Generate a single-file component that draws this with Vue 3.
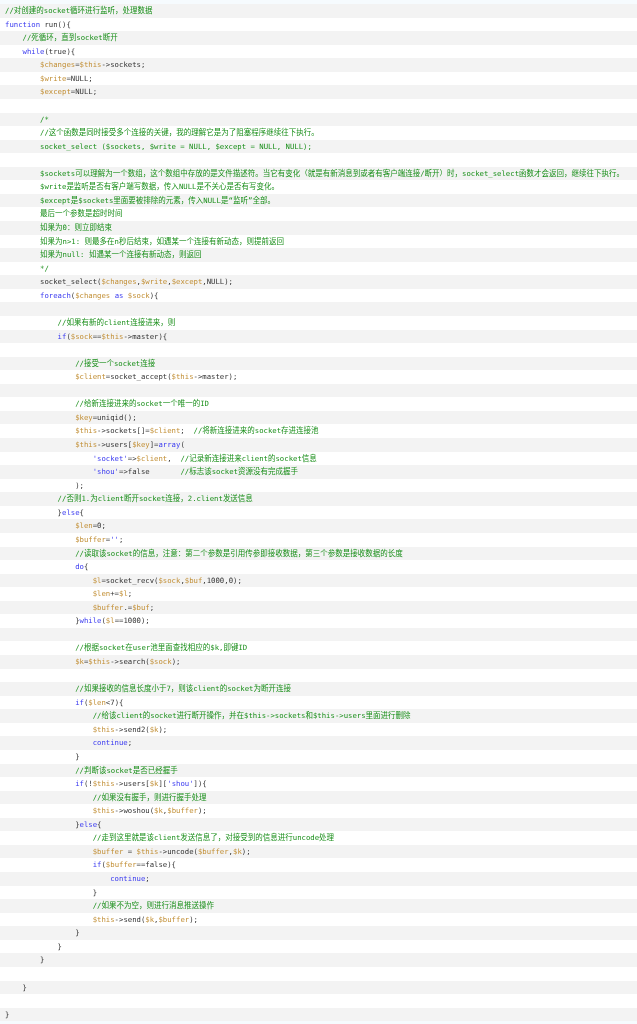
<script setup>
const source = [
  "//对创建的socket循环进行监听，处理数据",
  "function run(){",
  "    //死循环，直到socket断开",
  "    while(true){",
  "        $changes=$this->sockets;",
  "        $write=NULL;",
  "        $except=NULL;",
  "",
  "        /*",
  "        //这个函数是同时接受多个连接的关键，我的理解它是为了阻塞程序继续往下执行。",
  "        socket_select ($sockets, $write = NULL, $except = NULL, NULL);",
  "",
  "        $sockets可以理解为一个数组，这个数组中存放的是文件描述符。当它有变化（就是有新消息到或者有客户端连接/断开）时，socket_select函数才会返回，继续往下执行。",
  "        $write是监听是否有客户端写数据，传入NULL是不关心是否有写变化。",
  "        $except是$sockets里面要被排除的元素，传入NULL是“监听”全部。",
  "        最后一个参数是超时时间",
  "        如果为0：则立即结束",
  "        如果为n>1: 则最多在n秒后结束，如遇某一个连接有新动态，则提前返回",
  "        如果为null: 如遇某一个连接有新动态，则返回",
  "        */",
  "        socket_select($changes,$write,$except,NULL);",
  "        foreach($changes as $sock){",
  "",
  "            //如果有新的client连接进来，则",
  "            if($sock==$this->master){",
  "",
  "                //接受一个socket连接",
  "                $client=socket_accept($this->master);",
  "",
  "                //给新连接进来的socket一个唯一的ID",
  "                $key=uniqid();",
  "                $this->sockets[]=$client;  //将新连接进来的socket存进连接池",
  "                $this->users[$key]=array(",
  "                    'socket'=>$client,  //记录新连接进来client的socket信息",
  "                    'shou'=>false       //标志该socket资源没有完成握手",
  "                );",
  "            //否则1.为client断开socket连接，2.client发送信息",
  "            }else{",
  "                $len=0;",
  "                $buffer='';",
  "                //读取该socket的信息，注意：第二个参数是引用传参即接收数据，第三个参数是接收数据的长度",
  "                do{",
  "                    $l=socket_recv($sock,$buf,1000,0);",
  "                    $len+=$l;",
  "                    $buffer.=$buf;",
  "                }while($l==1000);",
  "",
  "                //根据socket在user池里面查找相应的$k,即键ID",
  "                $k=$this->search($sock);",
  "",
  "                //如果接收的信息长度小于7，则该client的socket为断开连接",
  "                if($len<7){",
  "                    //给该client的socket进行断开操作，并在$this->sockets和$this->users里面进行删除",
  "                    $this->send2($k);",
  "                    continue;",
  "                }",
  "                //判断该socket是否已经握手",
  "                if(!$this->users[$k]['shou']){",
  "                    //如果没有握手，则进行握手处理",
  "                    $this->woshou($k,$buffer);",
  "                }else{",
  "                    //走到这里就是该client发送信息了，对接受到的信息进行uncode处理",
  "                    $buffer = $this->uncode($buffer,$k);",
  "                    if($buffer==false){",
  "                        continue;",
  "                    }",
  "                    //如果不为空，则进行消息推送操作",
  "                    $this->send($k,$buffer);",
  "                }",
  "            }",
  "        }",
  "",
  "    }",
  "",
  "}",
];

const pattern = /(\$\w+)|('[^']*')|\b(function|while|foreach|as|if|else|do|array|continue)\b/g;

function tokenize(text) {
  const out = [];
  let last = 0;
  for (const m of text.matchAll(pattern)) {
    if (m.index > last) out.push({ t: text.slice(last, m.index), c: "plain" });
    out.push({ t: m[0], c: m[1] ? "variable" : "keyword" });
    last = m.index + m[0].length;
  }
  if (last < text.length) out.push({ t: text.slice(last), c: "plain" });
  return out;
}

// Latin and CJK runs sit at slightly different sizes in the reference.
function splitCjk(part) {
  return part.t
    .split(/([\u3000-\u9fff\uff00-\uffef“”]+)/)
    .filter(Boolean)
    .map((t) => ({ t, c: /^[\u3000-\u9fff\uff00-\uffef“”]/.test(t) ? `${part.c} cjk` : part.c }));
}

const lines = source.map((text, i) => {
  let parts;
  if (i >= 8 && i <= 19) {
    parts = [{ t: text, c: "comment" }];
  } else {
    const at = text.indexOf("//");
    parts = at < 0 ? tokenize(text) : [...tokenize(text.slice(0, at)), { t: text.slice(at), c: "comment" }];
  }
  return parts.flatMap(splitCjk);
});
</script>

<template>
  <main class="page">
    <ol class="code">
      <li v-for="(line, i) in lines" :key="i" class="row">
        <span v-for="(part, j) in line" :key="j" :class="part.c">{{ part.t }}</span>
      </li>
    </ol>
  </main>
</template>

<style>
html, body { margin: 0; background: #f6fbfe; }
</style>

<style scoped>
.page {
  height: 1024px;
  overflow: hidden;
  padding-top: 4px;
  box-sizing: border-box;
  background: #f6fbfe;
}
.code {
  list-style: none;
  margin: 0;
  padding: 0;
  font: 7.29px/13.57px "DejaVu Sans Mono", "Noto Sans CJK SC", monospace;
  filter: blur(0.35px);
}
.row {
  height: 13.57px;
  padding-left: 5px;
  white-space: pre;
  background: #fff;
}
.row:nth-child(odd) { background: #f3f3f3; }
.cjk { font-size: 7.5px; }
.plain { color: #333; }
.comment { color: #1a8f1a; }
.keyword { color: #3a3af0; }
.variable { color: #c28f35; }
</style>
